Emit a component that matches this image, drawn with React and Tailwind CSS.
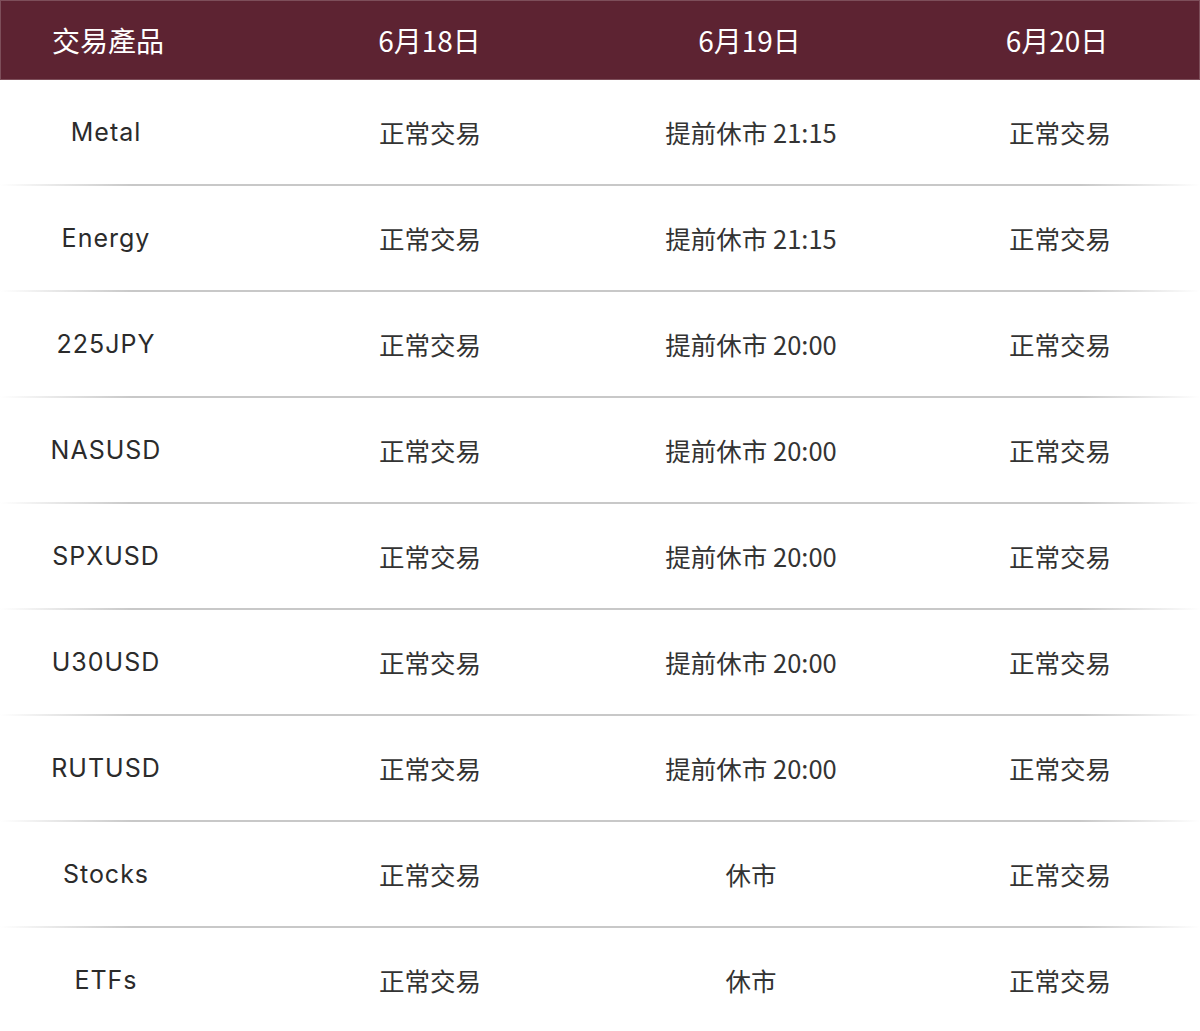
import React from "react";

const rows = [
  ["Metal", "正常交易", "提前休市 21:15", "正常交易"],
  ["Energy", "正常交易", "提前休市 21:15", "正常交易"],
  ["225JPY", "正常交易", "提前休市 20:00", "正常交易"],
  ["NASUSD", "正常交易", "提前休市 20:00", "正常交易"],
  ["SPXUSD", "正常交易", "提前休市 20:00", "正常交易"],
  ["U30USD", "正常交易", "提前休市 20:00", "正常交易"],
  ["RUTUSD", "正常交易", "提前休市 20:00", "正常交易"],
  ["Stocks", "正常交易", "休市", "正常交易"],
  ["ETFs", "正常交易", "休市", "正常交易"],
];

const cjk = "font-['Noto_Sans_CJK_TC','Noto_Sans_CJK_SC',sans-serif]";

export default function App() {
  return (
    <div className="w-[1200px] h-[1031px] bg-white overflow-hidden">
      <div
        className={`grid grid-cols-[212px_436px_206px_1fr] h-[80px] items-center bg-[#5d2332] border border-[#7d4e5a] text-white ${cjk}`}
      >
        <div className="text-center text-[28px] pl-[2px]">交易產品</div>
        <div className="text-center text-[28px] pr-[3px]">6月18日</div>
        <div className="text-center text-[28px] pr-[5px]">6月19日</div>
        <div className="text-center text-[28px] pl-[60px]">6月20日</div>
      </div>
      {rows.map((r, i) => (
        <div key={i} className="flex flex-col">
          <div className="grid grid-cols-[212px_436px_206px_1fr] h-[104px] items-center text-[#333333]">
            <div className="text-center text-[25px] tracking-[1px] pt-[1px] text-[#2b2b2b] font-['Inter',sans-serif]">
              {r[0]}
            </div>
            <div className={`text-center text-[25.5px] pt-[1px] ${cjk}`}>{r[1]}</div>
            <div className={`text-center text-[25.5px] ${cjk}`}>{r[2]}</div>
            <div className={`text-center text-[25.5px] pl-[66px] ${cjk}`}>{r[3]}</div>
          </div>
          {i < rows.length - 1 && (
            <div className="h-[2px] bg-[linear-gradient(90deg,#ffffff_0%,#c8c8c8_11%,#c8c8c8_90%,#ffffff_100%)]" />
          )}
        </div>
      ))}
    </div>
  );
}
